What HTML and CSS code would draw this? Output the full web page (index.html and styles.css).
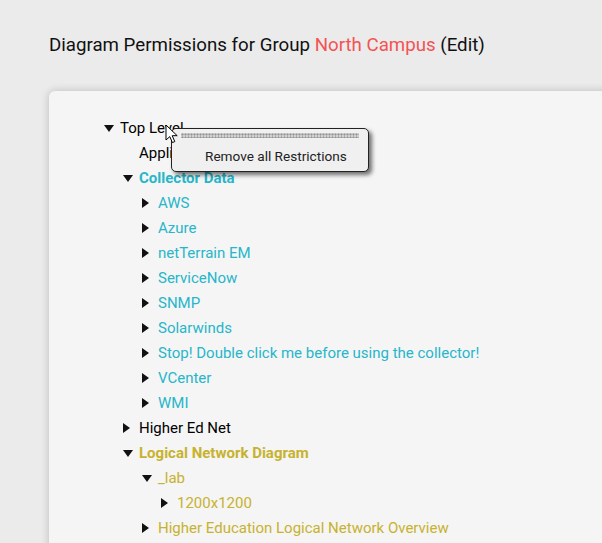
FILE: index.html
```html
<!DOCTYPE html>
<html lang="en">
    <head>
        <meta charset="UTF-8">
        <meta name="viewport" content="width=device-width, initial-scale=1.0">
        <title>Diagram Permissions</title>
        <link rel="stylesheet" href="styles.css">
    </head>
    <body>

        <!-- Page title -->
        <h1 class="page-title">Diagram Permissions for Group <span class="group-name">North Campus</span> (Edit)</h1>

        <!-- Permission tree -->
        <div class="panel">
            <ul class="tree">
                <li class="open">
                    <div class="row"><span class="toggle"></span>Top Level</div>
                    <ul>
                        <li class="leaf"><div class="row"><span class="toggle"></span>Applications</div></li>
                        <li class="open collector">
                            <div class="row bold"><span class="toggle"></span>Collector Data</div>
                            <ul>
                                <li><div class="row"><span class="toggle"></span>AWS</div></li>
                                <li><div class="row"><span class="toggle"></span>Azure</div></li>
                                <li><div class="row"><span class="toggle"></span>netTerrain EM</div></li>
                                <li><div class="row"><span class="toggle"></span>ServiceNow</div></li>
                                <li><div class="row"><span class="toggle"></span>SNMP</div></li>
                                <li><div class="row"><span class="toggle"></span>Solarwinds</div></li>
                                <li><div class="row"><span class="toggle"></span>Stop! Double click me before using the collector!</div></li>
                                <li><div class="row"><span class="toggle"></span>VCenter</div></li>
                                <li><div class="row"><span class="toggle"></span>WMI</div></li>
                            </ul>
                        </li>
                        <li><div class="row"><span class="toggle"></span>Higher Ed Net</div></li>
                        <li class="open logical">
                            <div class="row bold"><span class="toggle"></span>Logical Network Diagram</div>
                            <ul>
                                <li class="open">
                                    <div class="row"><span class="toggle"></span>_lab</div>
                                    <ul>
                                        <li><div class="row"><span class="toggle"></span>1200x1200</div></li>
                                    </ul>
                                </li>
                                <li><div class="row"><span class="toggle"></span>Higher Education Logical Network Overview</div></li>
                            </ul>
                        </li>
                    </ul>
                </li>
            </ul>

            <!-- Right click menu -->
            <div class="context-menu">
                <div class="tear-off"></div>
                <div class="menu-item">Remove all Restrictions</div>
            </div>

            <!-- Mouse pointer -->
            <svg class="pointer" width="14" height="21" viewBox="0 0 14 21">
                <path d="M1 1 L1 16 L4.8 12.6 L7.4 18.6 L9.8 17.6 L7.2 11.7 L12.2 11.7 Z" fill="#fff" stroke="#000" stroke-width="1" stroke-linejoin="round"/>
            </svg>
        </div>

    </body>
</html>
```

FILE: styles.css
```css
/* base */
html {
    overflow: hidden;
}
body {
    margin: 0;
    background-color: #ebebeb;
    font-family: Roboto, "Liberation Sans", sans-serif;
    color: #000;
}
.page-title {
    margin: 0;
    padding: 34px 0 0 49px;
    height: 23px;
    font-size: 18.7px;
    font-weight: normal;
    line-height: 23px;
    color: #111;
}
.group-name {
    color: #f35353;
}

/* panel */
.panel {
    position: relative;
    margin: 34px 0 0 49px;
    width: 620px;
    height: 520px;
    padding: 24px 0 0 55px;
    box-sizing: border-box;
    background-color: #f5f5f5;
    border-radius: 6px;
    box-shadow: 0 0 8px rgba(0, 0, 0, 0.2);
}

/* tree */
.tree,
.tree ul {
    list-style-type: none;
    margin: 0;
    padding: 0;
}
.tree ul {
    padding-left: 19px;
}
.row {
    display: flex;
    align-items: center;
    height: 25px;
    font-size: 15px;
    white-space: nowrap;
}
.row.bold {
    font-weight: bold;
}
.toggle {
    width: 16px;
    height: 10px;
    flex-shrink: 0;
    position: relative;
}
.toggle::before {
    content: "";
    position: absolute;
    left: 0;
    top: 0;
    border-style: solid;
    border-color: transparent transparent transparent #111;
    border-width: 5px 0 5px 7px;
}
.open > .row > .toggle::before {
    top: 2px;
    border-color: #111 transparent transparent transparent;
    border-width: 7px 5px 0 5px;
}
.leaf > .row > .toggle::before {
    display: none;
}
.collector > .row,
.collector li .row {
    color: #27b6ca;
}
.logical > .row,
.logical li .row {
    color: #c7b22f;
}

/* context menu */
.context-menu {
    position: absolute;
    left: 122px;
    top: 37px;
    width: 196px;
    height: 42px;
    background-color: #f0f0f0;
    border: 1px solid #222;
    border-radius: 5px;
    box-shadow: 3px 3px 4px rgba(0, 0, 0, 0.55);
}
.tear-off {
    margin: 4px 9px 0 9px;
    height: 5px;
    background-color: #d0d0d0;
    background-image: radial-gradient(circle, #909090 0.8px, transparent 1.2px);
    background-size: 3px 3px;
}
.menu-item {
    padding: 9px 0 0 33px;
    font-size: 13.6px;
    line-height: 18px;
    color: #222;
}
.pointer {
    position: absolute;
    left: 116px;
    top: 33px;
}
```
